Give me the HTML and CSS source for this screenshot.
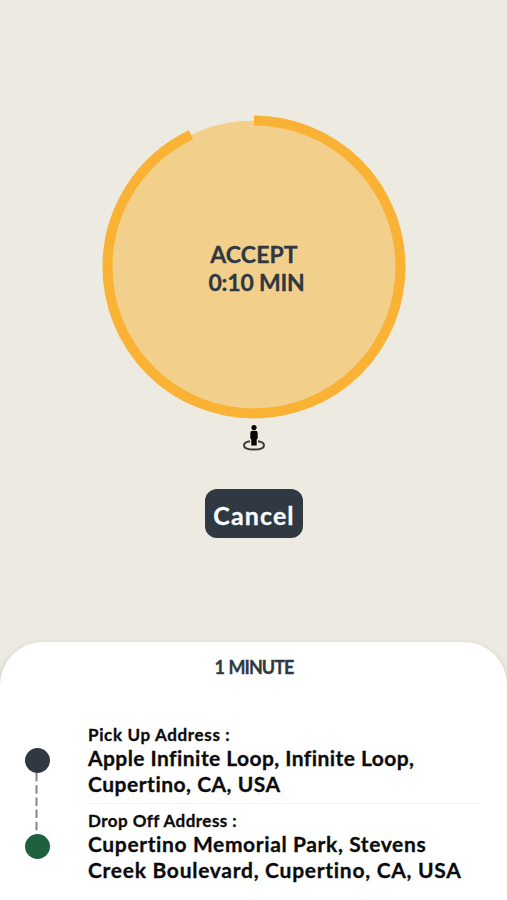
FILE: index.html
```html
<!DOCTYPE html>
<html lang="en">
<head>
<meta charset="utf-8">
<title>Ride request</title>
<link rel="stylesheet" href="styles.css">
</head>
<body>
<main class="screen">
  <section class="request">
    <div class="timer">
      <svg class="ring" viewBox="0 0 304 304" aria-hidden="true">
        <circle cx="152" cy="152" r="146.5" fill="#f2cf8b"/>
        <circle cx="152" cy="152" r="146.5" fill="none" stroke="#f9b233" stroke-width="10" pathLength="360" stroke-dasharray="334.5 25.5" transform="rotate(-90 152 152)"/>
      </svg>
      <div class="timer-text">
        <span class="accept">ACCEPT</span>
        <span class="time">0:10 MIN</span>
      </div>
    </div>
    <svg class="person" viewBox="0 0 24 28" aria-hidden="true">
      <path d="M8 17.200C4.500 17.700 2 19.200 2 21.200C2 24 6.500 25.600 12 25.600S22 24 22 21.200C22 19.200 19.500 17.700 16 17.200" fill="none" stroke="#3a3b38" stroke-width="2"/>
      <circle cx="12" cy="3.500" r="2.600" fill="#050505"/>
      <path d="M8.300 9Q8.300 6.800 10.500 6.800H13.500Q15.700 6.800 15.700 9V14.500L14.700 15.500V21.500H9.300V15.500L8.300 14.500Z" fill="#050505"/>
    </svg>
    <button class="cancel">Cancel</button>
  </section>
  <section class="sheet">
    <h1 class="eta">1 MINUTE</h1>
    <div class="trip">
      <div class="route">
        <span class="dot pickup"></span>
        <svg class="link" viewBox="0 0 25 61" aria-hidden="true"><path d="M11.500 0V61" stroke="#858585" stroke-width="2" stroke-dasharray="8.500 3.700"/></svg>
        <span class="dot dropoff"></span>
      </div>
      <div class="stops">
        <div class="stop">
          <div class="label"><span class="l1">Pick Up Address :</span></div>
          <div class="address"><span class="a1">Apple Infinite Loop, Infinite Loop,</span><br><span class="a2">Cupertino, CA, USA</span></div>
        </div>
        <div class="stop">
          <div class="label"><span class="l2">Drop Off Address :</span></div>
          <div class="address"><span class="a3">Cupertino Memorial Park, Stevens</span><br><span class="a4">Creek Boulevard, Cupertino, CA, USA</span></div>
        </div>
      </div>
    </div>
  </section>
</main>
</body>
</html>
```
FILE: styles.css
```css
* { box-sizing: border-box; }
body {
  margin: 0;
  background: #edeae1;
  color: #0b0b0c;
  font-family: "Century Gothic", Lato, sans-serif;
  font-weight: 700;
  -webkit-text-stroke: 0.3px currentColor;
}
.screen { height: 900px; display: flex; flex-direction: column; overflow: hidden; }
.request { height: 642px; padding: 115px 0 0 1px; display: flex; flex-direction: column; align-items: center; }
.timer { width: 304px; height: 304px; display: grid; }
.ring, .timer-text { grid-area: 1 / 1; }
.ring { width: 304px; height: 304px; }
.timer-text {
  display: flex; flex-direction: column; align-items: center;
  padding-top: 125px; color: #2f3840; font-size: 23px; line-height: 28px;
  white-space: nowrap;
}
.accept { letter-spacing: 0.1px; }
.time { padding-left: 5px; letter-spacing: -0.2px; }
.person { width: 24px; height: 28px; margin-top: 5px; }
.cancel {
  width: 98px; height: 49px; margin-top: 37px; padding: 2px 0 0;
  border: 0; border-radius: 12px; background: #303841; color: #f8fbff;
  font: inherit; font-size: 25px; letter-spacing: 1.100px;
  -webkit-text-stroke: 0.3px currentColor;
}
.sheet {
  height: 258px; background: #fff; border-radius: 43px 43px 0 0;
  box-shadow: 0 3px 6px rgba(60, 60, 50, 0.25);
}
.eta { margin: 0; padding: 13px 0 0 1px; text-align: center; font-size: 18px; line-height: 24px; letter-spacing: -0.950px; word-spacing: 1px; color: #303841; }
.trip { display: flex; padding: 43px 27px 0 25px; }
.route { width: 25px; padding-top: 26px; display: flex; flex-direction: column; }
.dot { width: 25px; height: 25px; border-radius: 50%; }
.pickup { background: #303841; }
.dropoff { background: #1f603f; }
.link { width: 25px; height: 61px; }
.stops { flex: 1; margin-left: 38px; }
.stop { height: 86px; padding-top: 1px; white-space: nowrap; }
.stop:first-child { height: 82px; border-bottom: 1px solid #f3f3f3; }
.stop + .stop { padding-top: 5px; }
.label { font-size: 17px; line-height: 23px; }
.address { font-size: 21px; line-height: 25.500px; margin-top: -1px; }
.l1 { letter-spacing: 0.650px; }
.l2 { letter-spacing: 0.450px; }
.a1 { letter-spacing: 0.430px; }
.a2 { letter-spacing: 0.500px; }
.a3 { letter-spacing: 0.620px; }
.a4 { letter-spacing: 0.720px; }
```
